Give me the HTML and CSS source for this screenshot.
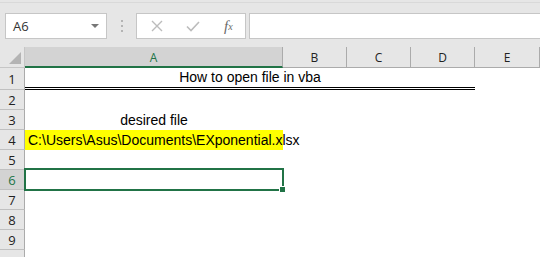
FILE: index.html
```html
<!DOCTYPE html>
<html lang="en">
<head>
    <meta charset="UTF-8">
    <title>How to open file in vba</title>
    <link rel="stylesheet" href="styles.css">
</head>
<body>
    <div class="toolbar">
        <div class="name-box">
            <span>A6</span>
            <span class="caret"></span>
        </div>
        <div class="grip"></div>
        <div class="fx-buttons">
            <svg class="fx-icon" width="14" height="14" viewBox="0 0 14 14"><path d="M2 2 L12 12 M12 2 L2 12" stroke="#bcbcbc" stroke-width="1.4" fill="none"/></svg>
            <svg class="fx-icon" width="16" height="14" viewBox="0 0 16 14"><path d="M2 7.5 L6 11.5 L14 3" stroke="#bcbcbc" stroke-width="1.6" fill="none"/></svg>
            <span class="fx">f<sub>x</sub></span>
        </div>
        <div class="formula-input"></div>
    </div>

    <div class="sheet">
        <div class="corner"><span class="corner-tri"></span></div>
        <div class="col-head active">A</div>
        <div class="col-head">B</div>
        <div class="col-head">C</div>
        <div class="col-head">D</div>
        <div class="col-head">E</div>

        <div class="row-head">1</div>
        <div class="cell title">How to open file in vba</div>
        <div class="cell"></div>

        <div class="row-head">2</div>
        <div class="cell wide"></div>

        <div class="row-head">3</div>
        <div class="cell center">desired file</div>
        <div class="cell rest"></div>

        <div class="row-head">4</div>
        <div class="cell path">C:\Users\Asus\Documents\EXponential.xlsx</div>
        <div class="cell rest"></div>

        <div class="row-head">5</div>
        <div class="cell wide"></div>

        <div class="row-head active">6</div>
        <div class="cell selected"></div>
        <div class="cell rest"></div>

        <div class="row-head">7</div>
        <div class="cell wide"></div>

        <div class="row-head">8</div>
        <div class="cell wide"></div>

        <div class="row-head">9</div>
        <div class="cell wide"></div>

        <div class="row-head"></div>
        <div class="cell wide"></div>
    </div>
</body>
</html>
```

FILE: styles.css
```css
body {
    margin: 0;
    padding: 0;
    background-color: #e6e6e6;
    font-family: 'Liberation Sans', Arial, sans-serif;
    height: 257px;
    overflow: hidden;
}

.toolbar {
    display: flex;
    align-items: flex-start;
    height: 45px;
    margin-top: 2px;
    border-top: 1px solid #d9d9d9;
    padding: 10px 0 0 5px;
    box-sizing: border-box;
}

.name-box {
    width: 102px;
    height: 26px;
    box-sizing: border-box;
    background: #fff;
    border: 1px solid #c6c6c6;
    display: flex;
    align-items: center;
    justify-content: space-between;
    padding: 0 7px 0 7px;
    font-family: 'Open Sans', sans-serif;
    font-size: 13px;
    color: #333;
}

.caret {
    width: 0;
    height: 0;
    border-left: 4px solid transparent;
    border-right: 4px solid transparent;
    border-top: 4px solid #777;
}

.grip {
    width: 2px;
    height: 12px;
    margin: 7px 13px 0 14px;
    background: repeating-linear-gradient(to bottom, #b4b4b4 0 2px, transparent 2px 5px);
}

.fx-buttons {
    width: 110px;
    height: 26px;
    box-sizing: border-box;
    background: #fff;
    border: 1px solid #c6c6c6;
    display: flex;
    align-items: center;
    padding: 0 0 0 13px;
    gap: 21px;
}

.fx {
    font-family: 'Liberation Serif', serif;
    font-style: italic;
    font-size: 15px;
    color: #6a6a6a;
    margin-left: 2px;
}

.fx sub {
    font-size: 10px;
    vertical-align: 1px;
}

.formula-input {
    flex: 1;
    height: 26px;
    margin-left: 3px;
    box-sizing: border-box;
    background: #fff;
    border: 1px solid #c6c6c6;
    border-right: none;
}

.sheet {
    display: grid;
    grid-template-columns: 25px 258px 64px 64px 64px 1fr;
    grid-template-rows: 21px 22px repeat(9, 20px);
    background: #fff;
}

.corner {
    background: #e6e6e6;
    border-right: 1px solid #c6c6c6;
    border-bottom: 1px solid #c6c6c6;
    box-sizing: border-box;
    position: relative;
}

.corner-tri {
    position: absolute;
    right: 3px;
    bottom: 3px;
    width: 0;
    height: 0;
    border-left: 12px solid transparent;
    border-bottom: 12px solid #b4b4b4;
}

.col-head {
    background: #e6e6e6;
    border-right: 1px solid #ababab;
    border-bottom: 1px solid #ababab;
    box-sizing: border-box;
    display: flex;
    align-items: center;
    justify-content: center;
    font-family: 'Open Sans', sans-serif;
    font-size: 12px;
    color: #222;
    padding-top: 1px;
}

.col-head.active {
    background: #d3d3d3;
    color: #217346;
    border-bottom: 2px solid #217346;
}

.row-head {
    background: #e6e6e6;
    border-right: 1px solid #ababab;
    border-bottom: 1px solid #c0c0c0;
    box-sizing: border-box;
    display: flex;
    align-items: center;
    justify-content: center;
    font-family: 'Open Sans', sans-serif;
    font-size: 13px;
    color: #222;
}

.row-head.active {
    background: #d3d3d3;
    color: #217346;
}

.cell {
    font-size: 14px;
    color: #000;
    line-height: 19px;
    white-space: nowrap;
}

.wide {
    grid-column: 2 / 7;
}

.rest {
    grid-column: 3 / 7;
}

.title {
    grid-column: 2 / 6;
    border-bottom: 3px double #000;
    text-align: center;
    line-height: 19px;
}

.center {
    text-align: center;
    padding-top: 1px;
}

.path {
    background: #ffff00;
    padding: 1px 0 0 3px;
    overflow: visible;
}

.selected {
    position: relative;
}

.selected::after {
    content: "";
    position: absolute;
    left: -1px;
    right: -1px;
    top: -2px;
    bottom: -1px;
    border: 2px solid #217346;
}

.selected::before {
    content: "";
    position: absolute;
    right: -3px;
    bottom: -3px;
    width: 5px;
    height: 5px;
    background: #217346;
    border: 1px solid #fff;
    z-index: 1;
}
```
